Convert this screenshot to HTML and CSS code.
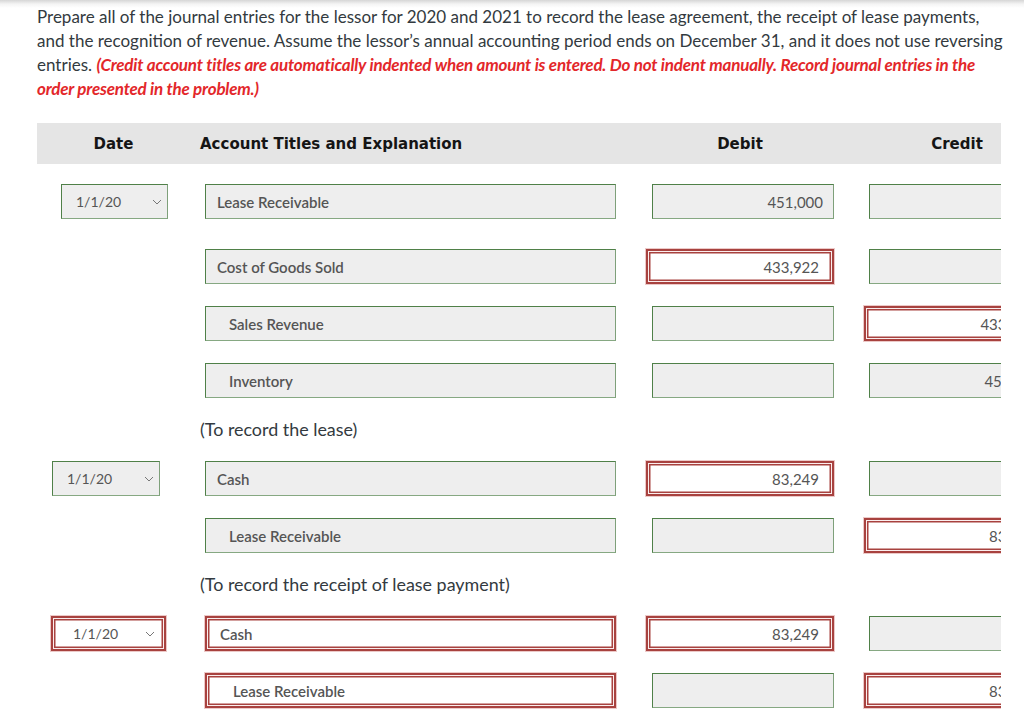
FILE: index.html
```html
<!DOCTYPE html>
<html>
<head>
<meta charset="utf-8">
<link rel="stylesheet" href="styles.css">
</head>
<body>
<p class="intro">Prepare all of the journal entries for the lessor for 2020 and 2021 to record the lease agreement, the receipt of lease payments,<br>and the recognition of revenue. Assume the lessor’s annual accounting period ends on December 31, and it does not use reversing<br>entries. <em class="warn">(Credit account titles are automatically indented when amount is entered. Do not indent manually. Record journal entries in the<br>order presented in the problem.)</em></p>

<div class="journal">
  <div class="row head">
    <div class="h-date">Date</div>
    <div class="h-acct">Account Titles and Explanation</div>
    <div class="h-debit">Debit</div>
    <div class="h-credit">Credit</div>
  </div>

  <div class="row first">
    <div class="cell"><div class="select d1">1/1/20<svg class="chev" width="10" height="6" viewBox="0 0 10 6"><path d="M1 1l4 4 4-4" fill="none" stroke="#777" stroke-width="1"/></svg></div></div>
    <div class="cell"><div class="field acct">Lease Receivable</div></div>
    <div class="cell"><div class="field amt">451,000</div></div>
    <div class="cell"><div class="field amt cr"></div></div>
  </div>

  <div class="row">
    <div class="cell"></div>
    <div class="cell"><div class="field acct">Cost of Goods Sold</div></div>
    <div class="cell"><div class="field amt bad">433,922</div></div>
    <div class="cell"><div class="field amt cr"></div></div>
  </div>

  <div class="row">
    <div class="cell"></div>
    <div class="cell"><div class="field acct indent">Sales Revenue</div></div>
    <div class="cell"><div class="field amt"></div></div>
    <div class="cell"><div class="field amt cr bad">433,922</div></div>
  </div>

  <div class="row">
    <div class="cell"></div>
    <div class="cell"><div class="field acct indent">Inventory</div></div>
    <div class="cell"><div class="field amt"></div></div>
    <div class="cell"><div class="field amt cr">451,000</div></div>
  </div>

  <div class="note">(To record the lease)</div>

  <div class="row">
    <div class="cell"><div class="select d2">1/1/20<svg class="chev" width="10" height="6" viewBox="0 0 10 6"><path d="M1 1l4 4 4-4" fill="none" stroke="#777" stroke-width="1"/></svg></div></div>
    <div class="cell"><div class="field acct">Cash</div></div>
    <div class="cell"><div class="field amt bad">83,249</div></div>
    <div class="cell"><div class="field amt cr"></div></div>
  </div>

  <div class="row">
    <div class="cell"></div>
    <div class="cell"><div class="field acct indent">Lease Receivable</div></div>
    <div class="cell"><div class="field amt"></div></div>
    <div class="cell"><div class="field amt cr bad">83,249</div></div>
  </div>

  <div class="note">(To record the receipt of lease payment)</div>

  <div class="row">
    <div class="cell"><div class="select d3 bad">1/1/20<svg class="chev" width="10" height="6" viewBox="0 0 10 6"><path d="M1 1l4 4 4-4" fill="none" stroke="#777" stroke-width="1"/></svg></div></div>
    <div class="cell"><div class="field acct bad">Cash</div></div>
    <div class="cell"><div class="field amt bad">83,249</div></div>
    <div class="cell"><div class="field amt cr"></div></div>
  </div>

  <div class="row">
    <div class="cell"></div>
    <div class="cell"><div class="field acct indent bad">Lease Receivable</div></div>
    <div class="cell"><div class="field amt"></div></div>
    <div class="cell"><div class="field amt cr bad">83,249</div></div>
  </div>
</div>
</body>
</html>
```

FILE: styles.css
```css
html, body {
  margin: 0;
  padding: 0;
}
body {
  width: 1024px;
  height: 711px;
  overflow: hidden;
  background: linear-gradient(#d6d6d6, #f4f4f4 4px, #ffffff 8px) no-repeat;
  background-size: 100% 8px;
  background-color: #fff;
  font-family: Lato, "Open Sans", sans-serif;
  color: #333a40;
}
.intro {
  margin: 0;
  padding: 5px 0 0 37px;
  font-size: 17px;
  line-height: 24px;
  white-space: nowrap;
}
.warn {
  color: #e3272a;
  font-weight: 700;
  font-style: italic;
  letter-spacing: -0.2px;
}
.journal {
  margin: 22px 0 0 37px;
  width: 964px;
  overflow: hidden;
}
.row {
  display: grid;
  grid-template-columns: 153px 444px 218px 218px;
  width: 1033px;
  margin-bottom: 22px;
  align-items: center;
}
.row.head {
  height: 41px;
  background: #e5e5e5;
  margin-bottom: 20px;
  font-family: "DejaVu Sans", Verdana, sans-serif;
  font-weight: 700;
  font-size: 15px;
  color: #151515;
}
.row.first {
  margin-bottom: 30px;
}
.h-date { text-align: center; }
.h-acct { padding-left: 10px; }
.h-debit { text-align: center; padding-right: 6px; }
.h-credit { text-align: center; padding-right: 8px; }

.cell {
  display: flex;
  height: 35px;
}
.field, .select {
  box-sizing: border-box;
  height: 35px;
  background: #eeeeee;
  border: 1px solid #4f8048;
  border-right-color: #7ea07a;
  border-bottom-color: #86a882;
  display: flex;
  align-items: center;
  font-size: 15px;
  color: #555;
  white-space: nowrap;
  overflow: hidden;
}
.acct {
  margin-left: 15px;
  width: 411px;
  padding-left: 11px;
  font-weight: 600;
  font-size: 15px;
  color: #555;
}
.acct.indent { padding-left: 23px; }
.amt {
  margin-left: 18px;
  width: 182px;
  justify-content: flex-end;
  padding-right: 10px;
}
.amt.cr { margin-left: 17px; }

.select {
  position: relative;
  padding-left: 14px;
  font-size: 14px;
}
.select .chev {
  position: absolute;
  right: 5px;
  top: 14px;
}
.d1 { margin-left: 24px; width: 107px; }
.d2 { margin-left: 15px; width: 108px; }
.d3 { margin-left: 14px; width: 115px; }

.bad {
  background: #fff;
  border: 2px solid #a8423f;
  box-shadow: 0 0 0 1px #ecc9c8, inset 0 0 0 1px #fbeeee, inset 0 0 0 2.5px #a8423f;
}
.amt.bad { margin-left: 12px; width: 188px; padding-right: 13px; }
.amt.cr.bad { margin-left: 12px; width: 187px; }
.acct.bad { padding-left: 13px; }
.acct.indent.bad { padding-left: 26px; }
.select.bad { padding-left: 20px; }
.select.bad .chev { right: 9px; top: 13px; }

.note {
  margin: -3px 0 20px 163px;
  height: 24px;
  line-height: 24px;
  font-size: 17.9px;
  color: #333a40;
}
```
